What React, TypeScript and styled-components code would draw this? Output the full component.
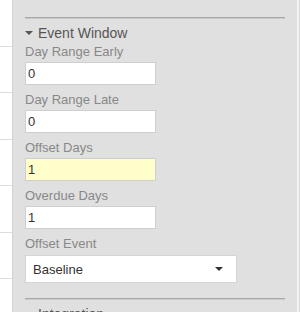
import styled, { createGlobalStyle } from "styled-components";

const GlobalStyle = createGlobalStyle`
  html, body {
    margin: 0;
    padding: 0;
    background: #ffffff;
    overflow: hidden;
  }
  body {
    font-family: "Liberation Sans", Arial, sans-serif;
  }
`;

const Page = styled.div`
  display: flex;
  width: 300px;
  height: 312px;
  overflow: hidden;
`;

const TableEdge = styled.div`
  width: 12px;
  flex: none;
  background: #ffffff;
`;

const TableRow = styled.div`
  height: 45.5px;
  border-bottom: 1px solid #dcdcdc;
`;

const Panel = styled.div`
  width: 260px;
  flex: none;
  background: #e0e0e0;
  border-left: 1px solid #d2d2d2;
  padding: 17px 12px 0 12px;
  box-sizing: content-box;
`;

const ScrollEdge = styled.div`
  width: 2px;
  flex: none;
  background: #f3f3f3;
  border-right: 1px solid #d8d8d8;
`;

const Separator = styled.div<{ $top?: number }>`
  height: 1px;
  background: #a8a8a8;
  box-shadow: 0 1px 0 #cacaca;
  margin-top: ${(p) => p.$top ?? 0}px;
`;

const SectionHeader = styled.div`
  display: flex;
  align-items: center;
  gap: 5px;
  margin-top: 7px;
  height: 16px;
  font-size: 14px;
  line-height: 16px;
  color: #555555;
  white-space: nowrap;
`;

const Caret = styled.span<{ $color?: string }>`
  display: inline-block;
  width: 0;
  height: 0;
  border-left: 4px solid transparent;
  border-right: 4px solid transparent;
  border-top: 4px solid ${(p) => p.$color ?? "#555555"};
`;

const Field = styled.div<{ $first?: boolean }>`
  display: flex;
  flex-direction: column;
  align-items: flex-start;
  margin-top: ${(p) => (p.$first ? 3 : 7)}px;
`;

const Label = styled.label`
  height: 16px;
  font-size: 13px;
  line-height: 16px;
  color: #888888;
`;

const TextInput = styled.input<{ $highlight?: boolean }>`
  margin-top: 2px;
  width: 131px;
  height: 23px;
  box-sizing: border-box;
  border: 1px solid #cfcfcf;
  padding: 0 2px;
  font-family: "Liberation Sans", Arial, sans-serif;
  font-size: 13px;
  color: #333333;
  background: ${(p) => (p.$highlight ? "#ffffcc" : "#ffffff")};
  outline: none;
`;

const Select = styled.div`
  margin-top: 3px;
  width: 212px;
  height: 28px;
  box-sizing: border-box;
  border: 1px solid #d4d4d4;
  background: #ffffff;
  display: flex;
  align-items: center;
  justify-content: space-between;
  padding: 0 13px 0 7px;
  font-size: 13px;
  color: #333333;
`;

const fields = [
  { label: "Day Range Early", value: "0" },
  { label: "Day Range Late", value: "0" },
  { label: "Offset Days", value: "1", highlight: true },
  { label: "Overdue Days", value: "1" },
];

export default function App() {
  return (
    <Page>
      <GlobalStyle />
      <TableEdge>
        {Array.from({ length: 7 }).map((_, i) => (
          <TableRow key={i} />
        ))}
      </TableEdge>
      <Panel>
        <Separator />
        <SectionHeader>
          <Caret />
          Event Window
        </SectionHeader>
        {fields.map((f, i) => (
          <Field key={f.label} $first={i === 0}>
            <Label>{f.label}</Label>
            <TextInput defaultValue={f.value} $highlight={f.highlight} />
          </Field>
        ))}
        <Field>
          <Label>Offset Event</Label>
          <Select>
            <span>Baseline</span>
            <Caret $color="#333333" />
          </Select>
        </Field>
        <Separator $top={15} />
        <SectionHeader>
          <Caret />
          Integration
        </SectionHeader>
      </Panel>
      <ScrollEdge />
    </Page>
  );
}
